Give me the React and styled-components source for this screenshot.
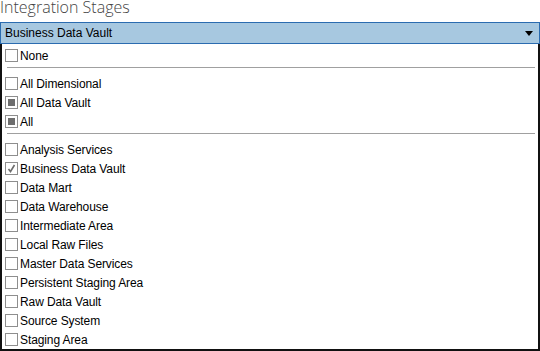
import React from "react";
import styled, { createGlobalStyle } from "styled-components";

const GlobalStyle = createGlobalStyle`
  html, body {
    margin: 0;
    padding: 0;
    background: #ffffff;
    font-family: "Liberation Sans", Arial, sans-serif;
  }
`;

const groups = [
  [{ label: "None", state: "off" }],
  [
    { label: "All Dimensional", state: "off" },
    { label: "All Data Vault", state: "partial" },
    { label: "All", state: "partial" },
  ],
  [
    { label: "Analysis Services", state: "off" },
    { label: "Business Data Vault", state: "on" },
    { label: "Data Mart", state: "off" },
    { label: "Data Warehouse", state: "off" },
    { label: "Intermediate Area", state: "off" },
    { label: "Local Raw Files", state: "off" },
    { label: "Master Data Services", state: "off" },
    { label: "Persistent Staging Area", state: "off" },
    { label: "Raw Data Vault", state: "off" },
    { label: "Source System", state: "off" },
    { label: "Staging Area", state: "off" },
  ],
];

function CheckBox({ state }) {
  return (
    <Box>
      {state === "partial" && <Fill />}
      {state === "on" && (
        <svg width="11" height="11" viewBox="0 0 11 11">
          <path d="M2.5 6 L4.5 8.5 L8.5 2" fill="none" stroke="#6d6d6d" strokeWidth="1.6" />
        </svg>
      )}
    </Box>
  );
}

export default function App() {
  return (
    <Page>
      <GlobalStyle />
      <Title>Integration Stages</Title>
      <Combo>
        <ComboText>Business Data Vault</ComboText>
        <svg width="8" height="5" viewBox="0 0 8 5">
          <path d="M0 0 H8 L4 5 Z" fill="#000" />
        </svg>
      </Combo>
      <Popup>
        {groups.map((group, gi) => (
          <React.Fragment key={gi}>
            {gi > 0 && <Separator />}
            {group.map((item) => (
              <Row key={item.label}>
                <CheckBox state={item.state} />
                <Label>{item.label}</Label>
              </Row>
            ))}
          </React.Fragment>
        ))}
      </Popup>
    </Page>
  );
}

const Page = styled.div`
  width: 540px;
  height: 351px;
  display: flex;
  flex-direction: column;
  overflow: hidden;
`;

const Title = styled.div`
  height: 22px;
  line-height: 14px;
  font-family: "Open Sans", "Liberation Sans", sans-serif;
  font-weight: 300;
  font-size: 16px;
  color: #444;
  overflow: hidden;
  flex-shrink: 0;
`;

const Combo = styled.div`
  height: 22px;
  box-sizing: border-box;
  border: 1px solid #2b6cb0;
  background: #a7c8e0;
  display: flex;
  align-items: center;
  justify-content: space-between;
  padding: 0 6px 0 4px;
  flex-shrink: 0;
`;

const ComboText = styled.span`
  font-size: 12px;
  color: #000;
`;

const Popup = styled.div`
  width: 540px;
  box-sizing: border-box;
  border: 2px solid #111;
  border-top: none;
  padding: 2px 0 0 3px;
  height: 307px;
  flex-shrink: 0;
`;

const Row = styled.div`
  height: 19px;
  display: flex;
  align-items: center;
  gap: 2px;
`;

const Box = styled.div`
  width: 13px;
  height: 13px;
  box-sizing: border-box;
  border: 1px solid #8e8e8e;
  background: #fff;
  display: flex;
  align-items: center;
  justify-content: center;
`;

const Fill = styled.div`
  width: 7px;
  height: 7px;
  background: #6e6e6e;
`;

const Label = styled.span`
  font-size: 12px;
  letter-spacing: -0.1px;
  color: #000;
`;

const Separator = styled.div`
  height: 1px;
  background: #a0a0a0;
  margin: 2px 3px 6px 2px;
`;
